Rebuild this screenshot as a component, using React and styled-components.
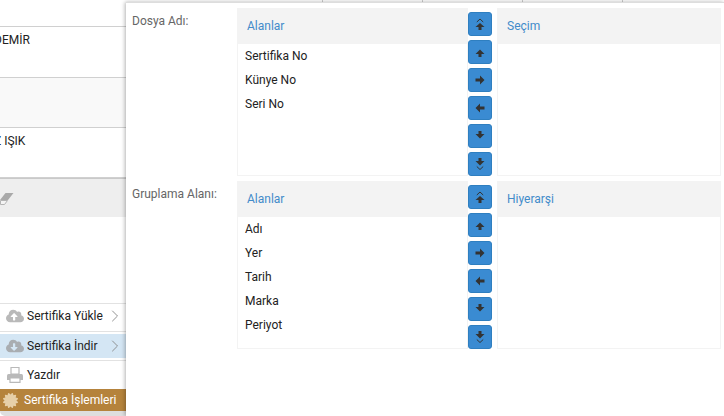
import React from "react";
import styled, { createGlobalStyle } from "styled-components";
import { FaCloudUploadAlt, FaCloudDownloadAlt, FaCertificate } from "react-icons/fa";
import { ChevronRight } from "lucide-react";

const GlobalStyle = createGlobalStyle`
  html, body {
    margin: 0;
    padding: 0;
    background: #fff;
    overflow: hidden;
  }
  * {
    box-sizing: border-box;
  }
`;

const ARROWS = {
  top: "M8 7 L12.5 11 H9.5 V14 H6.5 V11 H3.5 Z",
  up: "M8 5.5 L12.5 10 H9.5 V13 H6.5 V10 H3.5 Z",
  right: "M12.5 8 L8 3.5 V6.5 H3.5 V9.5 H8 V12.5 Z",
  left: "M3.5 8 L8 3.5 V6.5 H12.5 V9.5 H8 V12.5 Z",
  down: "M8 10.5 L12.5 6 H9.5 V3 H6.5 V6 H3.5 Z",
  bottom: "M8 9.5 L12.5 5 H9.5 V2 H6.5 V5 H3.5 Z",
};

function ArrowIcon({ name }) {
  return (
    <svg width="16" height="16" viewBox="0 0 16 16">
      <path d={ARROWS[name]} fill="#333" />
      {name === "top" && <path d="M4.8 6 L8 3 L11.2 6" fill="none" stroke="#333" strokeWidth="1" />}
      {name === "bottom" && <path d="M4.8 10.5 L8 13.5 L11.2 10.5" fill="none" stroke="#333" strokeWidth="1" />}
    </svg>
  );
}

function PrinterIcon() {
  return (
    <svg width="18" height="18" viewBox="0 0 18 18">
      <path d="M5 1.5 H13 V8 H5 Z" fill="none" stroke="#b9b9b9" strokeWidth="1.2" />
      <path d="M1 9.5 Q1 8 2.5 8 H15.5 Q17 8 17 9.5 V14 H1 Z" fill="#b9b9b9" />
      <path d="M4 12 H14 V16.4 H4 Z" fill="#fff" stroke="#b9b9b9" strokeWidth="1.2" />
    </svg>
  );
}

function EraserIcon() {
  return (
    <svg width="14" height="13" viewBox="0 0 14 13">
      <path d="M5.5 0 H13.5 L8 7 H0 Z" fill="#a9a9a9" />
      <path d="M0.5 7.5 H7.5 L4.5 11.5 H0.5 Z" fill="#f4f4f4" stroke="#b5b5b5" strokeWidth="1" />
    </svg>
  );
}

function TransferPanel({ label, title, target, fields }) {
  return (
    <Section>
      <FieldLabel>{label}</FieldLabel>
      <ListBox>
        <ListHeader>{title}</ListHeader>
        <FieldList>
          {fields.map((f) => (
            <FieldItem key={f}>{f}</FieldItem>
          ))}
        </FieldList>
      </ListBox>
      <ButtonColumn>
        {["top", "up", "right", "left", "down", "bottom"].map((n) => (
          <MoveButton key={n}>
            <ArrowIcon name={n} />
          </MoveButton>
        ))}
      </ButtonColumn>
      <ListBox>
        <ListHeader>{target}</ListHeader>
      </ListBox>
    </Section>
  );
}

export default function App() {
  return (
    <Page>
      <GlobalStyle />
      <LeftColumn>
        <TableRow $h={27} />
        <TableRow $h={51}>
          <CellText $shift={-6}>DEMİR</CellText>
        </TableRow>
        <TableRow $h={50} $striped />
        <TableRow $h={50}>
          <CellText $shift={-6}>Z IŞIK</CellText>
        </TableRow>
        <FilterRow>
          <EraserIcon />
        </FilterRow>
        <Menu>
          <MenuItem>
            <MenuIcon>
              <FaCloudUploadAlt size={18} color="#b9b9b9" />
            </MenuIcon>
            <span>Sertifika Yükle</span>
            <MenuArrow size={20} strokeWidth={1.1} />
          </MenuItem>
          <MenuItem $active>
            <MenuIcon>
              <FaCloudDownloadAlt size={18} color="#a9adb1" />
            </MenuIcon>
            <span>Sertifika İndir</span>
            <MenuArrow size={20} strokeWidth={1.1} />
          </MenuItem>
          <MenuItem>
            <MenuIcon>
              <PrinterIcon />
            </MenuIcon>
            <span>Yazdır</span>
          </MenuItem>
          <ActionButton>
            <FaCertificate size={15} color="#e6cfa8" />
            <span>Sertifika İşlemleri</span>
          </ActionButton>
        </Menu>
      </LeftColumn>
      <RightColumn>
        <TopStrip>
          <Tick />
          <Tick />
          <Tick />
          <Tick />
        </TopStrip>
        <Dialog>
          <TransferPanel
            label="Dosya Adı:"
            title="Alanlar"
            target="Seçim"
            fields={["Sertifika No", "Künye No", "Seri No"]}
          />
          <TransferPanel
            label="Gruplama Alanı:"
            title="Alanlar"
            target="Hiyerarşi"
            fields={["Adı", "Yer", "Tarih", "Marka", "Periyot"]}
          />
        </Dialog>
      </RightColumn>
    </Page>
  );
}

const Page = styled.div`
  display: grid;
  grid-template-columns: 126px 1fr;
  width: 724px;
  height: 416px;
  overflow: hidden;
  font-family: Roboto, "Liberation Sans", sans-serif;
  font-size: 12px;
  color: #222;
  background: #fff;
`;

const LeftColumn = styled.div`
  display: flex;
  flex-direction: column;
  height: 416px;
  overflow: hidden;
  background: #fff;
`;

const TableRow = styled.div`
  height: ${(p) => p.$h}px;
  border-bottom: 1px solid #d0d0d0;
  background: ${(p) => (p.$striped ? "#f9f9f9" : "#fff")};
`;

const CellText = styled.div`
  padding-top: 6px;
  margin-left: ${(p) => p.$shift}px;
  line-height: 14px;
  white-space: nowrap;
`;

const FilterRow = styled.div`
  display: flex;
  align-items: flex-start;
  height: 39px;
  padding-top: 14px;
  border-top: 1px solid #c9c9c9;
  background: #eee;
`;

const Menu = styled.div`
  display: flex;
  flex-direction: column;
  margin-top: auto;
  height: 113px;
  background: #fff;
`;

const MenuItem = styled.div`
  display: flex;
  align-items: center;
  height: 29px;
  padding: 2px 6px 0;
  border-top: 1px solid #e2e2e2;
  border-bottom: 2px solid #fff;
  box-shadow: inset 0 2px 0 #fff;
  background: ${(p) => (p.$active ? "#d4e6f4" : "#fff")};
  white-space: nowrap;

  &:first-child {
    height: 28px;
    padding: 0 6px 1px;
    box-shadow: none;
  }
`;

const MenuIcon = styled.span`
  display: flex;
  justify-content: center;
  width: 18px;
  margin-right: 3px;
`;

const MenuArrow = styled(ChevronRight)`
  margin-left: auto;
  margin-right: -5px;
  color: #888;
`;

const ActionButton = styled.div`
  display: flex;
  align-items: center;
  gap: 6px;
  height: 27px;
  padding: 0 0 5px 3px;
  border-radius: 0 0 0 5px;
  background: linear-gradient(#b5833c 22px, #dedede 22px);
  color: #fff;
  white-space: nowrap;
`;

const RightColumn = styled.div`
  display: flex;
  flex-direction: column;
  position: relative;
  z-index: 1;
`;

const TopStrip = styled.div`
  display: flex;
  height: 2px;
  padding-left: 97px;
`;

const Tick = styled.div`
  width: 100px;
  height: 2px;
  border-right: 1px solid #ccc;
`;

const Dialog = styled.div`
  flex: 1;
  padding: 5px 3px 0 6px;
  background: #fff;
  border-top: 1px solid #ddd;
  box-shadow: -1px 0 4px rgba(0, 0, 0, 0.3);
`;

const Section = styled.div`
  display: grid;
  grid-template-columns: 105px 231px 24px 229px;
  margin-bottom: 5px;
`;

const FieldLabel = styled.div`
  padding-top: 6px;
  line-height: 14px;
  color: #666;
  white-space: nowrap;
`;

const ListBox = styled.div`
  height: 168px;
  border: 1px solid #f3f3f3;
  border-top: 0;

  &:last-child {
    margin-left: 5px;
  }
`;

const ListHeader = styled.div`
  height: 36px;
  margin: 0 -1px;
  padding-left: 10px;
  line-height: 36px;
  background: #f3f3f3;
  color: #428bca;
`;

const FieldList = styled.ul`
  list-style: none;
  margin: 0;
  padding: 0 0 0 7px;
`;

const FieldItem = styled.li`
  height: 24px;
  line-height: 24px;
`;

const ButtonColumn = styled.div`
  display: flex;
  flex-direction: column;
  gap: 4px;
  padding-top: 4px;
`;

const MoveButton = styled.div`
  display: flex;
  align-items: center;
  justify-content: center;
  width: 24px;
  height: 24px;
  border: 1px solid #2f7fc0;
  border-radius: 3px;
  background: #3a8bd2;
`;
